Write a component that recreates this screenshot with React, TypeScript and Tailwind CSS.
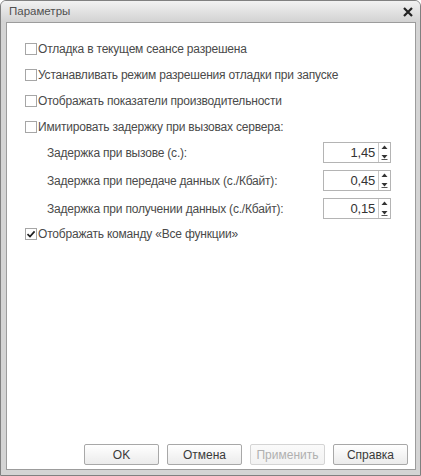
import React from "react";

const Check = ({ checked }: { checked?: boolean }) => (
  <div className="w-[12px] h-[12px] border border-[#a6a6a6] bg-white flex items-center justify-center shrink-0">
    {checked && (
      <svg width="10" height="10" viewBox="0 0 10 10">
        <path d="M1.5 5.2 L4 7.6 L8.6 2.4" fill="none" stroke="#222" strokeWidth="1.7" />
      </svg>
    )}
  </div>
);

const CheckRow = ({ label, checked }: { label: string; checked?: boolean }) => (
  <div className="h-[26px] flex items-center pl-[18px]">
    <Check checked={checked} />
    <span className="ml-[1px]">{label}</span>
  </div>
);

const Spin = ({ value }: { value: string }) => (
  <div className="w-[68px] h-[21px] border border-[#b4b4b4] bg-white flex">
    <div className="flex-1 flex items-center justify-end pr-[3px] text-[13px] text-[#333]">{value}</div>
    <div className="w-[12px] border-l border-[#c8c8c8] flex flex-col items-center justify-center gap-[3px]">
      <svg width="7" height="6" viewBox="0 0 7 6">
        <path d="M3.5 0.5 L6.5 4 L0.5 4 Z" fill="#333" />
      </svg>
      <svg width="7" height="6" viewBox="0 0 7 6">
        <path d="M0.5 1 L6.5 1 L3.5 4.5 Z" fill="#333" />
        <rect x="0.5" y="5" width="6" height="1" fill="#555" />
      </svg>
    </div>
  </div>
);

const SubRow = ({ label, value, cls }: { label: string; value: string; cls: string }) => (
  <div className={"flex items-center justify-between pl-[40px] pr-[24px] " + cls}>
    <span>{label}</span>
    <Spin value={value} />
  </div>
);

const Btn = ({ label, disabled }: { label: string; disabled?: boolean }) => (
  <div
    className={
      "w-[75px] h-[21px] rounded-[2px] border flex items-center justify-center bg-gradient-to-b " +
      (disabled
        ? "border-[#d4d4d4] from-[#fafafa] to-[#f2f2f2] text-[#b0b0b0]"
        : "border-[#a8a8a8] from-[#ffffff] to-[#ebebeb] text-[#3a3a3a]")
    }
  >
    {label}
  </div>
);

export default function App() {
  return (
    <div
      className="w-[421px] h-[476px] flex flex-col bg-[#d4d4d4] border border-[#808080] rounded-t-[6px] overflow-hidden"
      style={{ fontFamily: '"Liberation Sans", Arial, sans-serif' }}
    >
      <div className="h-[21px] flex items-center justify-between pl-[8px] pr-[6px] bg-gradient-to-b from-[#f2f2f2] to-[#d2d2d2] shrink-0">
        <span className="text-[11.5px] text-[#505050]">Параметры</span>
        <svg width="10" height="10" viewBox="0 0 10 10" className="mr-[1px]">
          <path d="M1 1 L9 9 M9 1 L1 9" stroke="#222" strokeWidth="2.2" />
        </svg>
      </div>
      <div className="flex-1 ml-[5px] mr-[4px] mb-[5px] bg-white border border-[#9c9c9c] flex flex-col text-[12px] tracking-[-0.2px] text-[#4a4a4a]">
        <div className="pt-[13px] flex flex-col">
          <CheckRow label="Отладка в текущем сеансе разрешена" />
          <CheckRow label="Устанавливать режим разрешения отладки при запуске" />
          <CheckRow label="Отображать показатели производительности" />
          <CheckRow label="Имитировать задержку при вызовах сервера:" />
          <SubRow cls="mt-[2px]" label="Задержка при вызове (с.):" value="1,45" />
          <SubRow cls="mt-[7px]" label="Задержка при передаче данных (с./Кбайт):" value="0,45" />
          <SubRow cls="mt-[7px]" label="Задержка при получении данных (с./Кбайт):" value="0,15" />
          <div className="mt-[2px]">
            <CheckRow label="Отображать команду «Все функции»" checked />
          </div>
        </div>
        <div className="mt-auto flex justify-end gap-[8px] pr-[7px] pb-[4px] tracking-normal">
          <Btn label="OK" />
          <Btn label="Отмена" />
          <Btn label="Применить" disabled />
          <Btn label="Справка" />
        </div>
      </div>
    </div>
  );
}
